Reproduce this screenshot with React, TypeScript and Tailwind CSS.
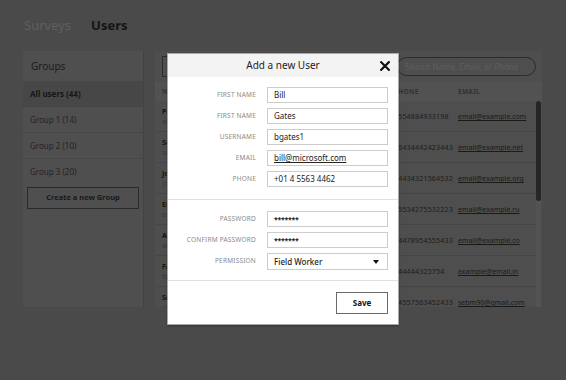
const rows = [
  { name: "Priya Sharma", sub: "alex@example.com", phone: "+554884933198", email: "email@example.com" },
  { name: "Sebastian Moore", sub: "seb@example.net", phone: "+6434442423443", email: "email@example.net" },
  { name: "John Carter", sub: "john@example.org", phone: "+4434321564532", email: "email@example.org" },
  { name: "Emma Ivanova", sub: "emma@example.ru", phone: "+5534275532223", email: "email@example.ru" },
  { name: "Anna Costa", sub: "anna@example.co", phone: "+4478954555433", email: "email@example.co" },
  { name: "Farhan Khan", sub: "farhan@email.in", phone: "+44444325754", email: "example@email.in" },
  { name: "Sebastian M.", sub: "amy@gmail.com", phone: "+4557563452433", email: "sebm90@gmail.com" },
];

function Field({ label, children, tall }: { label: string; children: React.ReactNode; tall?: boolean }) {
  return (
    <div className={`flex items-center ${tall ? "h-[17px]" : "h-[16px]"}`}>
      <div className="w-[88px] text-right text-[6.5px] tracking-[0.2px] text-[#8a8a8a] leading-none">{label}</div>
      <div
        className={`ml-[11px] w-[121px] ${tall ? "h-[17px]" : "h-[16px]"} border border-[#cdcdcd] px-[6px] flex items-center text-[8px] text-[#222] leading-none`}
      >
        {children}
      </div>
    </div>
  );
}

export default function App() {
  return (
    <div className="relative w-[566px] h-[380px] overflow-hidden bg-[#4a4a4a] font-['Noto_Sans',sans-serif]">
      {/* top nav */}
      <div className="flex h-[51px] items-center pl-[24px] gap-[20px]">
        <span className="text-[13px] text-[#5f5f5f]">Surveys</span>
        <span className="text-[13px] font-bold text-[#141414]">Users</span>
      </div>

      <div className="flex pl-[23px]">
        {/* groups */}
        <aside className="w-[121px] h-[256px] bg-[#4f4f4f] border-r border-[#434343] flex flex-col">
          <div className="h-[30px] flex items-center pl-[8px] text-[10px] text-[#1c1c1c]">Groups</div>
          <div className="h-[26px] flex items-center pl-[7px] text-[8px] font-bold text-[#161616] bg-[#474747] border-b border-[#464646]">
            All users (44)
          </div>
          <div className="h-[26px] flex items-center pl-[7px] text-[8px] text-[#242424] border-b border-[#474747]">Group 1 (14)</div>
          <div className="h-[26px] flex items-center pl-[7px] text-[8px] text-[#242424] border-b border-[#474747]">Group 2 (10)</div>
          <div className="h-[26px] flex items-center pl-[7px] text-[8px] text-[#242424]">Group 3 (20)</div>
          <div className="mx-[4px] mt-[2px] h-[22px] border border-[#2a2a2a] flex items-center justify-center text-[7.5px] font-bold text-[#1a1a1a]">
            Create a new Group
          </div>
        </aside>

        {/* table */}
        <section className="ml-[11px] w-[387px] h-[256px] bg-[#4e4e4e] flex flex-col">
          <div className="h-[31px] flex items-center justify-between pl-[7px] pr-[6px]">
            <div className="w-[200px] h-[21px] border-[1.5px] border-[#2d2d2d]" />
            <div className="w-[139px] h-[19px] rounded-full border border-[#2b2b2b] flex items-center pl-[7px] text-[8px] text-[#5f5f5f]">
              Search Name, Email, or Phone
            </div>
          </div>
          <div className="h-[19px] bg-[#525252] flex items-center pl-[7px] text-[6.5px] font-bold tracking-[0.3px] text-[#323232]">
            <div className="w-[232px]">NAME</div>
            <div className="w-[64px]">PHONE</div>
            <div>EMAIL</div>
          </div>
          <div className="flex flex-1 overflow-hidden">
            <div className="flex-1 flex flex-col">
              {rows.map((r) => (
                <div key={r.email} className="ml-[2px] h-[31px] shrink-0 border-b border-[#454545] flex items-center pl-[5px]">
                  <div className="w-[232px] flex flex-col gap-[3px] leading-none">
                    <span className="text-[7px] font-bold text-[#141414]">{r.name}</span>
                    <span className="text-[7px] text-[#393939]">{r.sub}</span>
                  </div>
                  <div className="w-[64px] pt-[3px] text-[7px] text-[#1c1c1c] tracking-[0.2px]">{r.phone}</div>
                  <div className="pt-[3px] text-[7px] text-[#1a1a1a] underline">{r.email}</div>
                </div>
              ))}
            </div>
            <div className="w-[5px] mr-[1px] bg-[#535353] flex flex-col">
              <div className="h-[100px] bg-[#262626] rounded-full" />
            </div>
          </div>
        </section>
      </div>

      {/* modal */}
      <div className="absolute left-[167px] top-[53px] w-[232px] bg-white border border-[#a9a9a9] shadow-[0_1px_2px_rgba(0,0,0,0.3)]">
        <div className="relative h-[23px] bg-[#f3f3f3] flex items-center justify-center text-[10px] text-[#1e1e1e]">
          Add a new User
          <svg className="absolute right-[8px] top-[7px]" width="10" height="10" viewBox="0 0 10 10">
            <path d="M1.2 1.2 L8.8 8.8 M8.8 1.2 L1.2 8.8" stroke="#111" strokeWidth="2.2" strokeLinecap="square" />
          </svg>
        </div>
        <div className="pt-[10px] pb-[12px] flex flex-col gap-[5px]">
          <Field label="FIRST NAME">Bill</Field>
          <Field label="FIRST NAME">Gates</Field>
          <Field label="USERNAME">bgates1</Field>
          <Field label="EMAIL">
            <span className="underline">bill@microsoft.com</span>
          </Field>
          <Field label="PHONE">+01 4 5563 4462</Field>
        </div>
        <div className="h-px bg-[#e0e0e0]" />
        <div className="pt-[11px] pb-[10px] flex flex-col gap-[5px]">
          <Field label="PASSWORD">
            <span className="text-[7px] font-bold tracking-[-0.3px]">*******</span>
          </Field>
          <Field label="CONFIRM PASSWORD">
            <span className="text-[7px] font-bold tracking-[-0.3px]">*******</span>
          </Field>
          <Field label="PERMISSION" tall>
            <span className="flex-1 font-medium">Field Worker</span>
            <svg width="6" height="4" viewBox="0 0 6 4" className="mr-[2px]">
              <path d="M0 0 H6 L3 4 Z" fill="#111" />
            </svg>
          </Field>
        </div>
        <div className="h-px bg-[#e0e0e0]" />
        <div className="pt-[11px] pb-[10px] pr-[10px] flex justify-end">
          <div className="w-[52px] h-[22px] border border-[#6b6b6b] flex items-center justify-center text-[8px] font-bold text-[#111]">
            Save
          </div>
        </div>
      </div>
    </div>
  );
}
